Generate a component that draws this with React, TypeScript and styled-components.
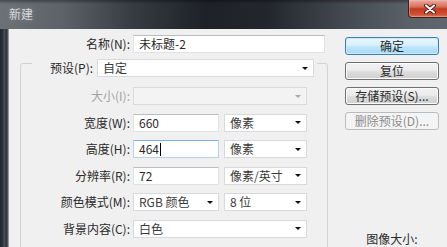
import React from "react";
import styled, { createGlobalStyle, css } from "styled-components";

const GlobalStyle = createGlobalStyle`
  html, body {
    margin: 0;
    padding: 0;
    background: #f0f0f0;
  }
  body {
    font-family: "Noto Sans CJK SC", "Microsoft YaHei", sans-serif;
    font-size: 12px;
    color: #2a2a2a;
  }
`;

const Select: React.FC<{ value?: string; width?: number; disabled?: boolean }> = (props) => {
  const { value, width, disabled } = props;
  return (
    <SelectBox $width={width} $disabled={disabled}>
      <span>{value}</span>
      <Arrow $disabled={disabled} />
    </SelectBox>
  );
};

const App: React.FC = () => {
  return (
    <Window>
      <GlobalStyle />
      <TitleBar>
        <Title>新建</Title>
        <CloseButton>
          <svg width="12" height="10" viewBox="0 0 12 10">
            <path d="M2 1.5 L10 8.5 M10 1.5 L2 8.5" stroke="#5a1c12" strokeWidth="4" strokeLinecap="round" />
            <path d="M2 1.5 L10 8.5 M10 1.5 L2 8.5" stroke="#ffffff" strokeWidth="2" strokeLinecap="round" />
          </svg>
        </CloseButton>
      </TitleBar>
      <Frame>
        <LeftFrame />
        <Body>
          <LeftPane>
            <NameRow>
              <NameLabel>名称(N):</NameLabel>
              <TextBox $width={192}>未标题-2</TextBox>
            </NameRow>
            <GroupBox>
              <Caption>
                <span>预设(P):</span>
                <Select value="自定" />
              </Caption>
              <Rows>
                <Row>
                  <Label $disabled>大小(I):</Label>
                  <Select width={174} disabled />
                </Row>
                <Row>
                  <Label>宽度(W):</Label>
                  <TextBox $width={86}>660</TextBox>
                  <Select value="像素" width={83} />
                </Row>
                <Row>
                  <Label>高度(H):</Label>
                  <TextBox $width={86} $focused>
                    464
                    <Caret />
                  </TextBox>
                  <Select value="像素" width={83} />
                </Row>
                <Row>
                  <Label>分辨率(R):</Label>
                  <TextBox $width={86}>72</TextBox>
                  <Select value="像素/英寸" width={83} />
                </Row>
                <Row>
                  <Label>颜色模式(M):</Label>
                  <Select value="RGB 颜色" width={86} />
                  <Select value="8 位" width={83} />
                </Row>
                <Row>
                  <Label>背景内容(C):</Label>
                  <Select value="白色" width={174} />
                </Row>
              </Rows>
            </GroupBox>
          </LeftPane>
          <RightPane>
            <Button $variant="default">确定</Button>
            <Button>复位</Button>
            <Button>存储预设(S)...</Button>
            <Button $variant="disabled">删除预设(D)...</Button>
            <ImageSize>图像大小:</ImageSize>
          </RightPane>
        </Body>
      </Frame>
    </Window>
  );
};

const Window = styled.div`
  width: 447px;
  height: 247px;
  display: flex;
  flex-direction: column;
  overflow: hidden;
`;

const TitleBar = styled.div`
  height: 29px;
  flex-shrink: 0;
  display: flex;
  justify-content: space-between;
  align-items: flex-start;
  overflow: hidden;
  background: linear-gradient(180deg, rgba(0, 0, 0, 0.35) 0px, rgba(0, 0, 0, 0) 4px),
    linear-gradient(
      90deg,
      #6c7178 0%,
      #5d6269 14%,
      #363b41 30%,
      #1e2227 46%,
      #23272d 60%,
      #454b53 78%,
      #5a6168 92%,
      #60666d 100%
    );
`;

const Title = styled.div`
  padding: 7px 0 0 9px;
  line-height: 14px;
  color: #d6d6d6;
  text-shadow: 0 0 5px rgba(255, 255, 255, 0.25);
`;

const CloseButton = styled.div`
  width: 43px;
  height: 18px;
  flex-shrink: 0;
  margin-right: -4px;
  box-sizing: border-box;
  border: 1px solid #43201a;
  border-top: none;
  border-radius: 0 0 4px 4px;
  display: flex;
  align-items: center;
  justify-content: center;
  background: linear-gradient(180deg, #e8ada1 0%, #d7705b 40%, #c23a20 52%, #cf5236 85%, #dc7a5f 100%);
  box-shadow: inset 0 0 0 1px rgba(255, 200, 190, 0.35);
`;

const Frame = styled.div`
  flex: 1;
  display: flex;
  min-height: 0;
`;

const LeftFrame = styled.div`
  width: 9px;
  flex-shrink: 0;
  background: linear-gradient(
    90deg,
    #23272d 0%,
    #2a3036 30%,
    #47535f 45%,
    #2c3137 70%,
    #5b5f64 88%,
    #c4c7ca 100%
  );
`;

const Body = styled.div`
  flex: 1;
  display: flex;
  background: #f0f0f0;
  padding: 6px 0 0 11px;
  overflow: hidden;
`;

const LeftPane = styled.div`
  width: 308px;
  flex-shrink: 0;
  display: flex;
  flex-direction: column;
`;

const NameRow = styled.div`
  display: flex;
  align-items: center;
  height: 18px;
`;

const NameLabel = styled.div`
  width: 113px;
  box-sizing: border-box;
  padding-right: 3px;
  text-align: right;
  line-height: 18px;
`;

const fieldBase = css`
  height: 18px;
  box-sizing: border-box;
  display: flex;
  align-items: center;
  padding: 0 0 0 5px;
  line-height: 16px;
  white-space: nowrap;
  flex-shrink: 0;
`;

const TextBox = styled.div<{ $width: number; $focused?: boolean }>`
  ${fieldBase};
  width: ${(p) => p.$width}px;
  background: #ffffff;
  border: 1px solid #dfe3e8;
  border-top-color: #b9bdc3;
  ${(p) =>
    p.$focused &&
    css`
      border-color: #b5d3ef;
      border-top-color: #7fb0df;
    `}
`;

const Caret = styled.span`
  display: inline-block;
  width: 0;
  height: 13px;
  border-left: 1px solid #000;
  margin-left: 1px;
`;

const SelectBox = styled.div<{ $width?: number; $disabled?: boolean }>`
  ${fieldBase};
  ${(p) => (p.$width ? `width: ${p.$width}px;` : "flex: 1;")}
  background: ${(p) => (p.$disabled ? "#f3f3f3" : "#ffffff")};
  border: 1px solid ${(p) => (p.$disabled ? "#dadada" : "#d6d9dd")};
  color: #3a3a3a;
  span {
    flex: 1;
  }
`;

const Arrow = styled.i<{ $disabled?: boolean }>`
  width: 0;
  height: 0;
  margin-right: 5px;
  border-left: 3px solid transparent;
  border-right: 3px solid transparent;
  border-top: 3px solid ${(p) => (p.$disabled ? "#a9a9a9" : "#111111")};
`;

const GroupBox = styled.div`
  margin-top: 10px;
  height: 240px;
  flex-shrink: 0;
  border: 1px solid #cfd3d7;
  border-radius: 3px;
`;

const Caption = styled.div`
  margin: -5px 10px 0 11px;
  padding: 0 3px 0 18px;
  height: 18px;
  display: flex;
  align-items: center;
  gap: 4px;
  background: #f0f0f0;
  line-height: 18px;
`;

const Rows = styled.div`
  margin-top: 10px;
  display: flex;
  flex-direction: column;
  gap: 8.5px;
`;

const Row = styled.div`
  display: flex;
  align-items: center;
  gap: 5px;
  height: 18px;
`;

const Label = styled.div<{ $disabled?: boolean }>`
  width: 112px;
  margin-right: -5px;
  box-sizing: border-box;
  padding-right: 3px;
  text-align: right;
  line-height: 18px;
  flex-shrink: 0;
  color: ${(p) => (p.$disabled ? "#a3a3a3" : "#2a2a2a")};
`;

const RightPane = styled.div`
  width: 94px;
  margin-left: 17px;
  padding-top: 2px;
  flex-shrink: 0;
  display: flex;
  flex-direction: column;
  gap: 7px;
`;

const Button = styled.div<{ $variant?: "default" | "disabled" }>`
  height: 18px;
  box-sizing: border-box;
  display: flex;
  align-items: center;
  justify-content: center;
  border-radius: 3px;
  line-height: 16px;
  border: 1px solid #707070;
  color: #2a2a2a;
  background: linear-gradient(180deg, #f2f2f2 0%, #ebebeb 45%, #dddddd 55%, #cfcfcf 100%);
  box-shadow: inset 0 0 0 1px #fbfbfb;
  ${(p) =>
    p.$variant === "default" &&
    css`
      border-color: #3c7fb1;
      background: linear-gradient(180deg, #eaf6fd 0%, #d9f0fc 45%, #bee6fd 55%, #a7d9f5 100%);
      box-shadow: inset 0 0 0 1px #c6ecfc;
    `}
  ${(p) =>
    p.$variant === "disabled" &&
    css`
      border-color: #b8bcbf;
      background: #f4f4f4;
      color: #8d8d8d;
      box-shadow: none;
    `}
`;

const ImageSize = styled.div`
  margin-top: 95px;
  text-align: center;
  line-height: 14px;
  color: #2a2a2a;
`;

export default App;
